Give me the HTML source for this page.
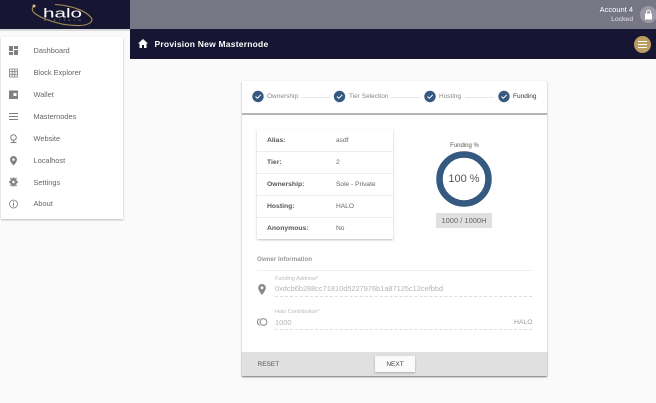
<!DOCTYPE html>
<html>
<head>
<meta charset="utf-8">
<style>
html,body{margin:0;padding:0;width:656px;height:403px;overflow:hidden;background:#fafafa;font-family:"Liberation Sans",sans-serif;}
.a{position:absolute;white-space:nowrap;}
.nav{font-size:7.4px;color:#666;left:33.5px;line-height:10px;}
.lbl{font-size:6.8px;font-weight:bold;color:#555;left:267px;line-height:10px;}
.val{font-size:6.6px;color:#666;left:336px;line-height:10px;}
.step{font-size:6.5px;color:#888;line-height:10px;top:92px;}
.ln{height:1px;background:#e6e6e6;top:97px;}
.row{left:257px;width:136px;height:1px;background:#eee;}
</style>
</head>
<body>
<div class="a" style="left:0;top:0;width:130px;height:29px;background:#171632;"></div>
<div class="a" style="left:130px;top:0;width:526px;height:29px;background:#777685;"></div>
<div class="a" style="left:0;top:29px;width:130px;height:2px;background:#d8d8d8;"></div>
<div class="a" style="left:130px;top:29px;width:526px;height:30px;background:#171632;"></div>

<svg class="a" style="left:25px;top:0" width="75" height="29" viewBox="25 0 75 29">
<path d="M33 7 C30 11 36 15 44 18.500 C55 23 68 26 80 25.500 C90 25 94 21 91 17.500 C86 11 72 5.500 55 4.500" fill="none" stroke="#a98f55" stroke-width="1.100"/>
<circle cx="34" cy="6" r="1.500" fill="#d8c28c"/>
<text x="43" y="17.500" font-family="Liberation Sans" font-size="13" fill="#fff" textLength="39" lengthAdjust="spacingAndGlyphs">halo</text>
<text x="44" y="21" font-family="Liberation Sans" font-size="3" fill="#aaa" textLength="37">platform</text>
</svg>

<div class="a" style="left:1px;top:37px;width:122px;height:182px;background:#fff;box-shadow:0 1px 2px rgba(0,0,0,.25);"></div>
<div class="a nav" style="top:46px">Dashboard</div>
<div class="a nav" style="top:68px">Block Explorer</div>
<div class="a nav" style="top:90px">Wallet</div>
<div class="a nav" style="top:112px">Masternodes</div>
<div class="a nav" style="top:134px">Website</div>
<div class="a nav" style="top:156px">Localhost</div>
<div class="a nav" style="top:178px">Settings</div>
<div class="a nav" style="top:199px">About</div>

<svg class="a" style="left:9px;top:46px" width="10" height="170" viewBox="0 0 10 170" fill="#808080">
<path d="M0 0h4v5H0zM5 0h4v3H5zM5 4h4v5H5zM0 6h4v3H0z"/>
<path d="M.5 23h8v8h-8zM.5 25.700h8M.5 28.300h8M3.200 23v8M5.800 23v8" fill="none" stroke="#808080" stroke-width=".8"/>
<path d="M0 44.500h9v8.500H0z"/><rect x="4.500" y="47" width="3" height="3" fill="#fff"/>
<path d="M0 67h9v1H0zM0 70h9v1H0zM0 73h9v1H0z"/>
<circle cx="4.500" cy="91.500" r="2.800" fill="none" stroke="#808080"/><path d="M4 94h1v2H4zM1.500 96h6v1h-6z"/>
<path d="M4.500 110a3.500 3.500 0 0 1 3.500 3.500c0 2.500-3.500 6-3.500 6s-3.500-3.500-3.500-6a3.500 3.500 0 0 1 3.500-3.500z"/><circle cx="4.500" cy="113.500" r="1.300" fill="#fff"/>
<circle cx="4.500" cy="136" r="3.500"/><circle cx="4.500" cy="136" r="1.300" fill="#fff"/><path d="M3.500 131.500h2v1.500h-2zM3.500 139h2v1.500h-2zM0 135.200h1.500v1.600H0zM7.500 135.200H9v1.600H7.500zM1 132.500l1-1 1 1-1 1zM7 131.500l1 1-1 1-1-1zM1 139.500l1-1 1 1-1 1zM7 138.500l1 1-1 1-1-1z"/>
<circle cx="4.500" cy="158" r="4" fill="none" stroke="#808080" stroke-width=".8"/><path d="M4 157h1v3.500H4zM4 155h1v1H4z"/>
</svg>

<svg class="a" style="left:138px;top:39px" width="10" height="9" viewBox="0 0 10 9"><path d="M5 0L0 4.500h1.500V9h2.500V6h2v3h2.500V4.500H10z" fill="#fff"/></svg>
<div class="a" style="left:154.500px;top:39px;font-size:8.500px;font-weight:bold;color:#fff;line-height:11px;letter-spacing:.22px">Provision New Masternode</div>

<div class="a" style="right:23px;top:5px;font-size:7.500px;color:#fff;line-height:10px;">Account 4</div>
<div class="a" style="right:23px;top:15px;font-size:6.800px;color:#e6e6e6;line-height:10px;">Locked</div>
<div class="a" style="left:640px;top:6px;width:17px;height:17px;border-radius:50%;background:#9b9aa4;"></div>
<svg class="a" style="left:644px;top:9px" width="9" height="11" viewBox="0 0 9 11"><path d="M2.500 5V3.300a2 2 0 0 1 4 0V5" fill="none" stroke="#fff" stroke-width="1"/><rect x="1" y="4.500" width="7" height="6" rx=".8" fill="#fff"/></svg>
<div class="a" style="left:634px;top:36px;width:17px;height:17px;border-radius:50%;background:#bd9c62;"></div>
<div class="a" style="left:638px;top:41px;width:9px;height:1px;background:#fff;"></div>
<div class="a" style="left:638px;top:44px;width:9px;height:1px;background:#fff;"></div>
<div class="a" style="left:638px;top:47px;width:9px;height:1px;background:#fff;"></div>

<div class="a" style="left:242px;top:81px;width:305px;height:295px;background:#fff;box-shadow:0 1px 2px rgba(0,0,0,.3);"></div>
<div class="a" style="left:242px;top:113px;width:305px;height:2px;background:#b5b5b5;"></div>

<svg class="a" style="left:252px;top:90px" width="290" height="14" viewBox="0 0 290 14">
<circle cx="6" cy="6.500" r="5.700" fill="#35597f"/><path d="M3.500 6.500l1.800 1.800 3.400-3.400" fill="none" stroke="#fff" stroke-width="1"/>
<circle cx="87.500" cy="6.500" r="5.700" fill="#35597f"/><path d="M85 6.500l1.800 1.800 3.400-3.400" fill="none" stroke="#fff" stroke-width="1"/>
<circle cx="178" cy="6.500" r="5.700" fill="#35597f"/><path d="M175.500 6.500l1.800 1.800 3.400-3.400" fill="none" stroke="#fff" stroke-width="1"/>
<circle cx="252" cy="6.500" r="5.700" fill="#35597f"/><path d="M249.500 6.500l1.800 1.800 3.400-3.400" fill="none" stroke="#fff" stroke-width="1"/>
</svg>
<div class="a step" style="left:267px">Ownership</div>
<div class="a ln" style="left:301px;width:29px"></div>
<div class="a step" style="left:349px">Tier Selection</div>
<div class="a ln" style="left:391px;width:29px"></div>
<div class="a step" style="left:439px">Hosting</div>
<div class="a ln" style="left:465px;width:29px"></div>
<div class="a step" style="left:513px;color:#333">Funding</div>

<div class="a" style="left:257px;top:130px;width:136px;height:109px;background:#fff;box-shadow:0 1px 2px rgba(0,0,0,.25);"></div>
<div class="a row" style="top:151px"></div>
<div class="a row" style="top:173px"></div>
<div class="a row" style="top:195px"></div>
<div class="a row" style="top:217px"></div>
<div class="a lbl" style="top:136px">Alias:</div><div class="a val" style="top:136px">asdf</div>
<div class="a lbl" style="top:158px">Tier:</div><div class="a val" style="top:158px">2</div>
<div class="a lbl" style="top:180px">Ownership:</div><div class="a val" style="top:180px">Sole - Private</div>
<div class="a lbl" style="top:202px">Hosting:</div><div class="a val" style="top:202px">HALO</div>
<div class="a lbl" style="top:224px">Anonymous:</div><div class="a val" style="top:224px">No</div>

<div class="a" style="left:420px;width:89px;text-align:center;top:142px;font-size:6px;color:#555;line-height:8px">Funding %</div>
<svg class="a" style="left:435px;top:150px" width="58" height="58" viewBox="0 0 58 58"><circle cx="29" cy="29" r="24.500" fill="none" stroke="#35597f" stroke-width="6.500"/></svg>
<div class="a" style="left:435px;width:58px;text-align:center;top:172px;font-size:11px;color:#555;line-height:14px">100 %</div>
<div class="a" style="left:436px;top:213px;width:56px;height:15px;background:#e0e0e0;text-align:center;font-size:7.500px;color:#666;line-height:15px">1000 / 1000H</div>

<div class="a" style="left:257px;top:255.500px;font-size:6.200px;font-weight:bold;color:#999;line-height:8px">Owner Information</div>
<div class="a" style="left:257px;top:270px;width:275px;height:1px;background:#f0f0f0"></div>
<div class="a" style="left:275px;top:276px;font-size:5.500px;color:#bbb;line-height:7px">Funding Address*</div>
<div class="a" style="left:275px;top:284px;font-size:7.400px;color:#b5b5b5;line-height:10px">0xdcb6b288cc71810d5227976b1a87125c12cefbbd</div>
<div class="a" style="left:275px;top:296px;width:257px;border-top:1px dashed #ddd"></div>
<svg class="a" style="left:258px;top:284px" width="8" height="11" viewBox="0 0 8 11"><path d="M4 0a3.800 3.800 0 0 1 3.800 3.800C7.800 6.500 4 11 4 11S.2 6.500.2 3.800A3.800 3.800 0 0 1 4 0z" fill="#888"/><circle cx="4" cy="3.800" r="1.400" fill="#fff"/></svg>
<div class="a" style="left:275px;top:309px;font-size:5.500px;color:#bbb;line-height:7px">Halo Contribution*</div>
<div class="a" style="left:275px;top:318px;font-size:7.400px;color:#b5b5b5;line-height:10px">1000</div>
<div class="a" style="left:514px;top:318px;font-size:6.800px;color:#999;line-height:10px">HALO</div>
<div class="a" style="left:275px;top:329px;width:257px;border-top:1px dashed #ddd"></div>
<svg class="a" style="left:256px;top:317px" width="12" height="10" viewBox="0 0 12 10"><circle cx="7.500" cy="5" r="3.400" fill="none" stroke="#888"/><path d="M3.800 1.700a3.500 3.500 0 0 0 0 6.600" fill="none" stroke="#888"/></svg>

<div class="a" style="left:242px;top:352px;width:305px;height:24px;background:#e0e0e0;box-shadow:0 1px 1px rgba(0,0,0,.3)"></div>
<div class="a" style="left:257.500px;top:359.500px;font-size:6.500px;color:#555;line-height:10px">RESET</div>
<div class="a" style="left:375px;top:356px;width:40px;height:16px;background:#fafafa;box-shadow:0 1px 2px rgba(0,0,0,.25);text-align:center;font-size:6.500px;color:#444;line-height:17px">NEXT</div>
</body>
</html>
